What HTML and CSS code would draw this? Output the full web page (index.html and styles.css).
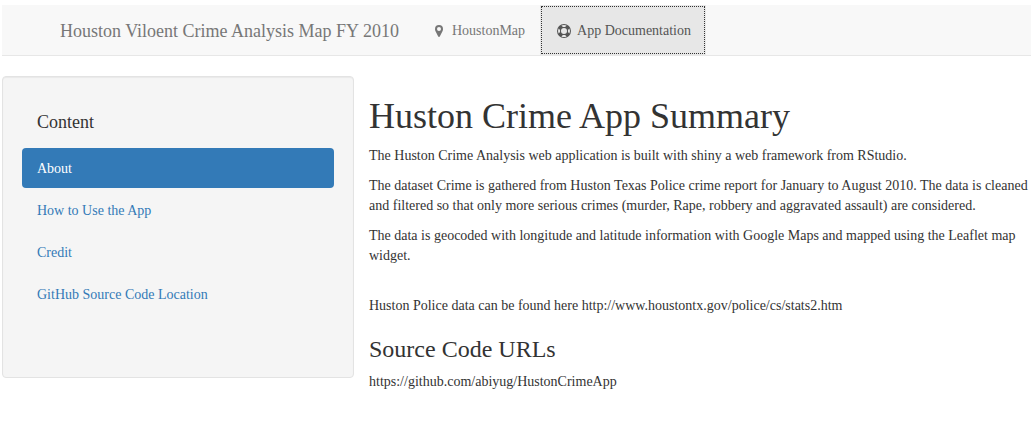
FILE: index.html
```html
<!DOCTYPE html>
<html lang="en">
<head>
<meta charset="utf-8">
<title>Houston Viloent Crime Analysis Map FY 2010</title>
<link rel="stylesheet" href="styles.css">
</head>
<body>
<nav class="navbar">
  <span class="brand">Houston Viloent Crime Analysis Map FY 2010</span>
  <ul class="tabs">
    <li><a class="tab" href="#map">
      <svg class="icon icon-pin" viewBox="0 0 8 12" aria-hidden="true"><path fill-rule="evenodd" d="M4 0a4 4 0 0 1 4 4c0 .7-.1 1.300-.4 1.900L4.800 11.500a.9.9 0 0 1-1.600 0L.4 5.900C.1 5.300 0 4.700 0 4a4 4 0 0 1 4-4zm0 2a2 2 0 1 0 0 4 2 2 0 0 0 0-4z"/></svg>
      HoustonMap</a></li>
    <li><a class="tab tab-active" href="#docs" aria-current="page">
      <svg class="icon icon-ring" viewBox="0 0 14 14" aria-hidden="true"><path fill-rule="evenodd" d="M7 0a7 7 0 1 1 0 14A7 7 0 0 1 7 0zm0 1c-.9 0-1.800.2-2.600.6l1.500 1.500a4 4 0 0 1 2.200 0l1.500-1.500C8.800 1.200 7.900 1 7 1zM1.600 9.600l1.500-1.500a4 4 0 0 1 0-2.200L1.600 4.400a6 6 0 0 0 0 5.200zM7 13c.9 0 1.800-.2 2.600-.6l-1.500-1.500a4 4 0 0 1-2.200 0l-1.500 1.500c.8.4 1.700.6 2.600.6zm0-3a3 3 0 1 0 0-6 3 3 0 0 0 0 6zm3.900-1.900l1.500 1.500a6 6 0 0 0 0-5.200l-1.500 1.500a4 4 0 0 1 0 2.200z"/></svg>
      App Documentation</a></li>
  </ul>
</nav>
<div class="layout">
  <aside class="well">
    <h2 class="well-title">Content</h2>
    <ul class="pills">
      <li><a class="pill pill-active" href="#about">About</a></li>
      <li><a class="pill" href="#how-to">How to Use the App</a></li>
      <li><a class="pill" href="#credit">Credit</a></li>
      <li><a class="pill" href="#source">GitHub Source Code Location</a></li>
    </ul>
  </aside>
  <main class="content">
    <h1 class="title">Huston Crime App Summary</h1>
    <p>The Huston Crime Analysis web application is built with shiny a web framework from RStudio.</p>
    <p>The dataset Crime is gathered from Huston Texas Police crime report for January to August 2010. The data is cleaned and filtered so that only more serious crimes (murder, Rape, robbery and aggravated assault) are considered.</p>
    <p>The data is geocoded with longitude and latitude information with Google Maps and mapped using the Leaflet map widget.</p>
    <p class="spaced">Huston Police data can be found here http://www.houstontx.gov/police/cs/stats2.htm</p>
    <h3 class="subtitle">Source Code URLs</h3>
    <p>https://github.com/abiyug/HustonCrimeApp</p>
  </main>
</div>
</body>
</html>
```
FILE: styles.css
```css
* {
  box-sizing: border-box;
}

body {
  margin: 0;
  padding: 5px 0 0 2px;
  background: #fff;
  color: #333;
  font-family: "Liberation Serif", "Times New Roman", serif;
  font-size: 14px;
  line-height: 20px;
}

h1, h2, h3, p, ul {
  margin: 0;
  padding: 0;
  font-weight: 400;
}

ul {
  list-style: none;
}

a {
  color: #337ab7;
  text-decoration: none;
}

.navbar {
  display: flex;
  padding-left: 58px;
  margin-bottom: 20px;
  background: #f8f8f8;
  border-bottom: 1px solid #e7e7e7;
}

.brand {
  padding: 16px 21px 14px 0;
  color: #777;
  font-size: 18px;
}

.tabs {
  display: flex;
}

.tab {
  display: flex;
  align-items: center;
  padding: 16px 15px 14px;
  color: #777;
}

.tab-active {
  padding-left: 17px;
  background: #e7e7e7;
  color: #555;
  outline: 1px dotted #333;
  outline-offset: -2px;
}

.icon {
  fill: currentColor;
}

.icon-pin {
  width: 8px;
  height: 12px;
  margin-right: 9px;
}

.icon-ring {
  width: 14px;
  height: 14px;
  margin-right: 6px;
}

.layout {
  display: grid;
  grid-template-columns: 352px minmax(0, 1fr);
  column-gap: 15px;
  align-items: start;
}

.well {
  padding: 19px 19px 63px;
  background: #f5f5f5;
  border: 1px solid #e3e3e3;
  border-radius: 4px;
  box-shadow: inset 0 1px 1px rgba(0, 0, 0, 0.05);
}

.well-title {
  padding: 16px 15px 14px;
  margin-bottom: 2px;
  font-size: 18px;
}

.pills {
  display: flex;
  flex-direction: column;
  gap: 2px;
}

.pill {
  display: block;
  padding: 11px 15px 9px;
  border-radius: 4px;
}

.pill-active {
  background: #337ab7;
  color: #fff;
}

.content p {
  margin-bottom: 10px;
}

.content .spaced {
  margin-top: 30px;
}

.title {
  margin: 20px 0 10px;
  font-size: 36px;
  line-height: 40px;
}

.subtitle {
  margin: 20px 0 10px;
  font-size: 24px;
  line-height: 26px;
}
```
